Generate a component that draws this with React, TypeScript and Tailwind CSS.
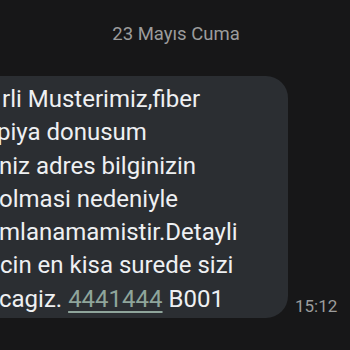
import React from 'react';

const lines: { text: React.ReactNode; shift: string }[] = [
  { text: 'rli Musterimiz,fiber', shift: 'ml-[2px]' },
  { text: 'piya donusum', shift: '-ml-[3px]' },
  { text: 'niz adres bilginizin', shift: '-ml-px' },
  { text: 'olmasi nedeniyle', shift: '-ml-px' },
  { text: 'mlanamamistir.Detayli', shift: '-ml-px' },
  { text: 'cin en kisa surede sizi', shift: 'ml-0' },
  {
    text: (
      <>
        cagiz.{' '}
        <span className="text-[#8fa59b] underline underline-offset-[4px] decoration-[1.5px]">4441444</span> B001
      </>
    ),
    shift: '-ml-px',
  },
];

const App: React.FC = () => {
  return (
    <div className="w-[350px] h-[350px] bg-[#171718] overflow-hidden font-['Roboto',sans-serif]">
      <div className="pt-[21px] h-[76px] text-center text-[18.5px] leading-[26px] text-[#9c9c9c] pl-[2px]">
        23 Mayıs Cuma
      </div>
      <div className="flex items-end">
        <div className="w-[288px] h-[242px] bg-[#2b2e32] rounded-r-[22px] pt-[7px] whitespace-nowrap overflow-hidden">
          {lines.map((l, i) => (
            <div key={i} className={`${l.shift} text-[24px] leading-[33.3px] text-[#eef0f2]`}>
              {l.text}
            </div>
          ))}
        </div>
        <div className="ml-[7px] mb-[1px] text-[17px] leading-[22px] text-[#9c9c9c]">15:12</div>
      </div>
    </div>
  );
};

export default App;
